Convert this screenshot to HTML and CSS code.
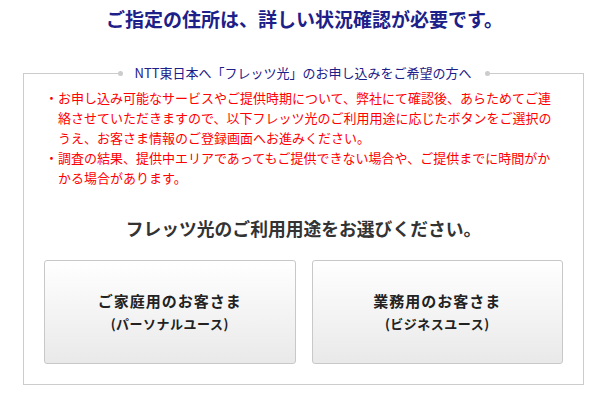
FILE: index.html
```html
<!DOCTYPE html>
<html lang="ja">
<head>
<meta charset="utf-8">
<title>ご指定の住所は、詳しい状況確認が必要です。</title>
<link rel="stylesheet" href="styles.css">
</head>
<body>
<main class="page">
  <h1 class="page-title">ご指定の住所は、詳しい状況確認が必要です。</h1>
  <section class="panel">
    <div class="panel-head">
      <span class="rule rule-left"></span>
      <span class="dot"></span>
      <h2 class="panel-title">NTT東日本へ「フレッツ光」のお申し込みをご希望の方へ</h2>
      <span class="dot"></span>
      <span class="rule rule-right"></span>
    </div>
    <div class="panel-body">
      <ul class="notes">
        <li>お申し込み可能なサービスやご提供時期について、弊社にて確認後、あらためてご連絡させていただきますので、以下フレッツ光のご利用用途に応じたボタンをご選択のうえ、お客さま情報のご登録画面へお進みください。</li>
        <li>調査の結果、提供中エリアであってもご提供できない場合や、ご提供までに時間がかかる場合があります。</li>
      </ul>
      <p class="choose">フレッツ光のご利用用途をお選びください。</p>
      <div class="choices">
        <a class="choice" href="#">
          <span class="choice-main">ご家庭用のお客さま</span>
          <span class="choice-sub">(パーソナルユース)</span>
        </a>
        <a class="choice" href="#">
          <span class="choice-main">業務用のお客さま</span>
          <span class="choice-sub">(ビジネスユース)</span>
        </a>
      </div>
    </div>
  </section>
</main>
</body>
</html>
```

FILE: styles.css
```css
* {
  box-sizing: border-box;
}

html, body {
  margin: 0;
  padding: 0;
  background: #ffffff;
}

body {
  font-family: "Noto Sans CJK JP", "Noto Sans", sans-serif;
  color: #333333;
}

.page {
  width: 609px;
  padding: 5px 0 0;
}

.page-title {
  margin: 0;
  font-size: 19px;
  line-height: 28px;
  font-weight: 700;
  color: #1d2088;
  text-align: center;
}

.panel {
  width: 561px;
  margin: 30px 0 0 23px;
}

.panel-head {
  display: flex;
  align-items: center;
  height: 20px;
}

.rule {
  flex: 1;
  align-self: stretch;
  margin-top: 10px;
  border-top: 1px solid #cccccc;
}

.rule-left {
  border-left: 1px solid #cccccc;
}

.rule-right {
  border-right: 1px solid #cccccc;
}

.dot {
  width: 5px;
  height: 5px;
  border-radius: 50%;
  background: #cccccc;
}

.panel-title {
  margin: 0 13px 0 12px;
  font-size: 13px;
  line-height: 20px;
  font-weight: 400;
  color: #1d2088;
  white-space: nowrap;
}

.panel-body {
  border: 1px solid #cccccc;
  border-top: none;
  padding: 5px 20px 20px;
}

.notes {
  list-style: none;
  margin: 0;
  padding: 0 4px 0 1px;
  color: #ff0000;
  font-size: 13px;
  line-height: 20px;
}

.notes li {
  position: relative;
  padding-left: 13px;
}

.notes li::before {
  content: "・";
  position: absolute;
  left: 0;
  top: 0;
}

.choose {
  margin: 27px 0 0;
  font-size: 17.8px;
  line-height: 26px;
  font-weight: 700;
  color: #333333;
  text-align: center;
}

.choices {
  display: flex;
  gap: 16px;
  margin-top: 19px;
}

.choice {
  flex: 1;
  height: 104px;
  display: flex;
  flex-direction: column;
  align-items: center;
  justify-content: center;
  gap: 2px;
  border: 1px solid #c8c8c8;
  border-radius: 3px;
  background: linear-gradient(to bottom, #ffffff 0%, #e9e9e9 100%);
  color: #222222;
  text-decoration: none;
  font-weight: 700;
}

.choice-main {
  font-size: 15px;
  line-height: 22px;
  letter-spacing: 1px;
}

.choice-sub {
  font-size: 13px;
  line-height: 20px;
  letter-spacing: 0.5px;
}
```
